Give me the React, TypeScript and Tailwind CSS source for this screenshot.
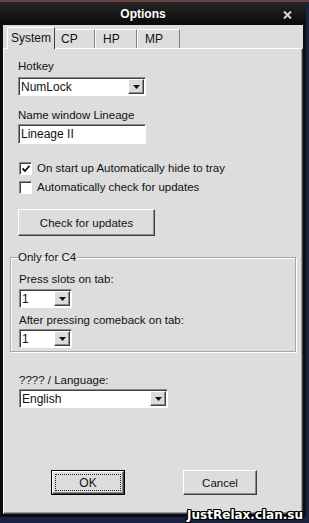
import React from "react";

const raised =
  "border border-t-white border-l-white border-r-[#404040] border-b-[#404040] shadow-[inset_-1px_-1px_0_#8a8a8a]";
const sunken =
  "border border-t-[#8a8a8a] border-l-[#8a8a8a] border-r-white border-b-white shadow-[inset_1px_1px_0_#404040]";

function Arrow() {
  return (
    <svg width="7" height="4" viewBox="0 0 7 4">
      <path d="M0 0h7L3.5 4z" fill="#111" />
    </svg>
  );
}

function Combo({ value, width }: { value: string; width: string }) {
  return (
    <div className={`${sunken} ${width} h-[19px] bg-white flex items-center`}>
      <span className="flex-1 pl-[2px] text-[12px] leading-[14px]">{value}</span>
      <div className={`${raised} w-[16px] h-[15px] mr-[1px] bg-[#dcdcdc] flex items-center justify-center`}>
        <Arrow />
      </div>
    </div>
  );
}

function Check({ checked, label }: { checked?: boolean; label: string }) {
  return (
    <div className="flex items-center h-[14px] ml-[1px]">
      <div className={`${sunken} w-[13px] h-[13px] bg-white flex items-center justify-center`}>
        {checked && (
          <svg width="8" height="7" viewBox="0 0 8 7">
            <path d="M0.5 3.5 L3 6 L7.5 0.8" stroke="#111" strokeWidth="1.8" fill="none" />
          </svg>
        )}
      </div>
      <span className="ml-[5px] text-[11.5px] leading-[14px]">{label}</span>
    </div>
  );
}

export default function App() {
  return (
    <div className="relative w-[309px] h-[523px] overflow-hidden bg-[#1a2440] font-['Liberation_Sans',Arial,sans-serif] text-[#111]">
      <div className="h-[2px] bg-[#6a4040]" />
      <div className="w-[306px] h-[515px] bg-[#0e0e12] flex flex-col px-[3px] pb-[3px]">
        {/* title bar */}
        <div className="h-[23px] relative flex items-center justify-center bg-gradient-to-b from-[#262626] to-[#0a0a0a] -mx-[3px]">
          <span className="text-white font-bold text-[12px] leading-[14px] -ml-[20px]">Options</span>
          <svg className="absolute right-[14px] top-[9px]" width="9" height="8" viewBox="0 0 9 8">
            <path d="M1 0.5 L8 7.5 M8 0.5 L1 7.5" stroke="#d8d8d8" strokeWidth="2" />
          </svg>
        </div>
        {/* body */}
        <div className="flex-1 bg-[#dddddd] flex flex-col">
          {/* tabs */}
          <div className="h-[23px] flex items-end pl-[4px]">
            <div className="h-[22px] w-[48px] bg-[#dddddd] border-l border-t border-white border-r border-r-[#404040] flex items-start justify-center pt-[3px] text-[12px] leading-[14px] relative z-10 -mb-[1px]">
              System
            </div>
            <div className="h-[19px] w-[40px] border-t border-white border-r border-r-[#808080] flex items-start pl-[6px] pt-[2px] text-[12px] leading-[14px]">
              CP
            </div>
            <div className="h-[19px] w-[42px] border-t border-l border-white border-r border-r-[#808080] flex items-start pl-[7px] pt-[2px] text-[12px] leading-[14px]">
              HP
            </div>
            <div className="h-[19px] w-[43px] border-t border-l border-white border-r border-r-[#808080] flex items-start pl-[7px] pt-[2px] text-[12px] leading-[14px]">
              MP
            </div>
          </div>
          {/* panel */}
          <div className="flex-1 border-t border-l border-white border-r border-r-[#404040] border-b border-b-[#505050] shadow-[inset_-1px_-1px_0_#9a9a9a] flex flex-col pl-[6px] text-[11.5px]">
            <div className="flex flex-col pl-[8px]">
              <div className="mt-[10px] leading-[14px]">Hotkey</div>
              <div className="mt-[4px]">
                <Combo value="NumLock" width="w-[128px]" />
              </div>
              <div className="mt-[12px] leading-[14px]">Name window Lineage</div>
              <div className={`${sunken} mt-[2px] w-[128px] h-[20px] bg-white flex items-center pl-[2px] text-[12px] leading-[14px]`}>
                Lineage II
              </div>
              <div className="mt-[17px]">
                <Check checked label="On start up Automatically hide to tray" />
              </div>
              <div className="mt-[5px]">
                <Check label="Automatically check for updates" />
              </div>
              <button className={`${raised} mt-[15px] w-[137px] h-[27px] bg-[#dddddd] text-[11.5px] leading-[14px] flex items-center justify-center`}>
                Check for updates
              </button>
            </div>
            <fieldset className="mt-[14px] w-[286px] border border-[#a8a8a8] shadow-[1px_1px_0_white,inset_1px_1px_0_white] pl-[8px] pb-[3px]">
              <legend className="leading-[14px] -ml-[1px] px-[0px] pr-[1px]">Only for C4</legend>
              <div className="mt-[8px] leading-[14px]">Press slots on tab:</div>
              <div className="mt-[3px]">
                <Combo value="1" width="w-[53px]" />
              </div>
              <div className="mt-[5px] leading-[14px]">After pressing comeback on tab:</div>
              <div className="mt-[2px]">
                <Combo value="1" width="w-[53px]" />
              </div>
            </fieldset>
            <div className="flex flex-col pl-[9px]">
              <div className="mt-[21px] leading-[14px]">???? / Language:</div>
              <div className="mt-[2px]">
                <Combo value="English" width="w-[149px]" />
              </div>
            </div>
            <div className="mt-[62px] flex pl-[41px]">
              <button className="w-[74px] h-[25px] border border-black bg-[#dddddd] p-0">
                <div className={`${raised} w-full h-full flex items-center justify-center p-[2px]`}>
                  <div className="w-full h-full border border-dotted border-[#222] flex items-center justify-center text-[12px] leading-[14px]">
                    OK
                  </div>
                </div>
              </button>
              <button className={`${raised} ml-[58px] w-[74px] h-[25px] bg-[#dddddd] text-[11.5px] leading-[14px] flex items-center justify-center`}>
                Cancel
              </button>
            </div>
          </div>
        </div>
      </div>
      <div
        className="absolute right-[6px] bottom-[1px] text-white font-bold text-[12px] leading-[14px] font-['DejaVu_Sans',sans-serif] tracking-[0px]"
        style={{ textShadow: "1px 0 0 #000,-1px 0 0 #000,0 1px 0 #000,0 -1px 0 #000,1px 1px 0 #000,-1px -1px 0 #000,1px -1px 0 #000,-1px 1px 0 #000" }}
      >
        JustRelax.clan.su
      </div>
    </div>
  );
}
